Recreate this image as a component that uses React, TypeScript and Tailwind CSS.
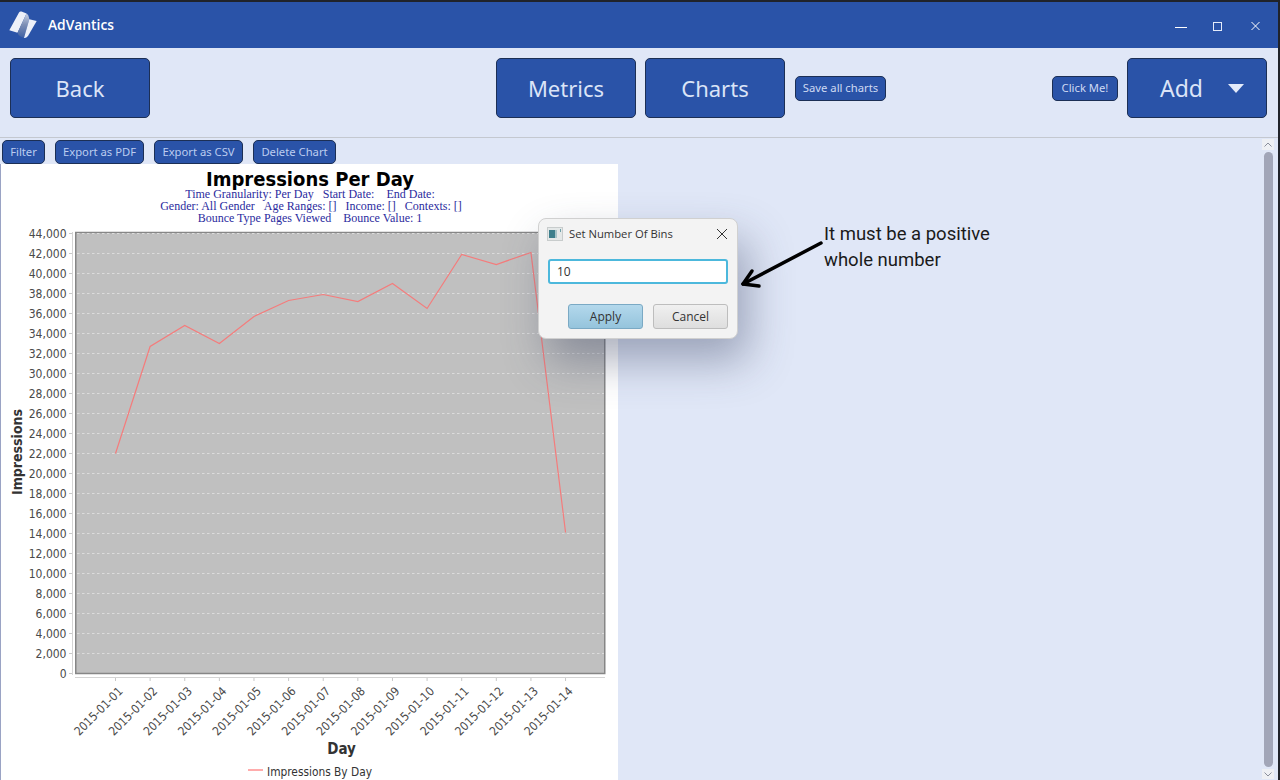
import React from "react";

const data = [22000, 32700, 34800, 33000, 35700, 37300, 37900, 37200, 39000, 36500, 41900, 40900, 42100, 14100];
const yTicks = Array.from({ length: 23 }, (_, i) => i * 2000);
const py = (v: number) => 509.5 - v * 0.01;
const px = (i: number) => 115.5 + i * 34.62;
const tickFont = "'DejaVu Sans Condensed', 'Noto Sans', sans-serif";
const s3 = "\u00a0\u00a0\u00a0";

function Chart() {
  const points = data.map((v, i) => `${px(i)},${py(v)}`).join(" ");
  return (
    <svg width="617" height="616" viewBox="0 0 617 616" className="block">
      <rect width="617" height="616" fill="#ffffff" />
      <g transform="translate(-1 0)">
        <text x="310" y="22" textAnchor="middle" fontSize="20" fontWeight="700" fill="#000" fontFamily="'DejaVu Sans', sans-serif" textLength="208" lengthAdjust="spacingAndGlyphs">Impressions Per Day</text>
        <g fontFamily="'Liberation Serif', serif" fontSize="12" fill="#2b2b9e" textAnchor="middle">
          <text x="310" y="34">{`Time Granularity: Per Day${s3}Start Date:${s3}\u00a0End Date:`}</text>
          <text x="311" y="46">{`Gender: All Gender${s3}Age Ranges: []${s3}Income: []${s3}Contexts: []`}</text>
          <text x="310" y="58">{`Bounce Type Pages Viewed${s3}\u00a0Bounce Value: 1`}</text>
        </g>
        <rect x="75.75" y="68.5" width="529" height="441" fill="#c0c0c0" stroke="#868686" strokeWidth="1.5" />
        {yTicks.map((v) => (
          <g key={v}>
            {v > 0 && <line x1="77" x2="604" y1={py(v)} y2={py(v)} stroke="#dcdcdc" strokeWidth="1" strokeDasharray="2.5 2.5" />}
            <line x1="69" x2="72" y1={py(v)} y2={py(v)} stroke="#c8c8c8" />
            <text x="66.5" y={py(v) + 4.5} textAnchor="end" fontSize="12" fill="#4a4a4a" fontFamily={tickFont}>{v.toLocaleString("en-US")}</text>
          </g>
        ))}
        <line x1="72.5" x2="72.5" y1="68" y2="511" stroke="#d4d4d4" />
        <line x1="75" x2="605" y1="513.5" y2="513.5" stroke="#d4d4d4" />
        <polyline points={points} fill="none" stroke="#f47c7c" strokeWidth="1.2" />
        {data.map((_, i) => (
          <g key={i}>
            <line x1={px(i)} x2={px(i)} y1="514" y2="517" stroke="#c8c8c8" />
            <text transform={`translate(${px(i) + 8} 528) rotate(-45)`} textAnchor="end" fontSize="12" fill="#4a4a4a" fontFamily={tickFont}>
              {`2015-01-${String(i + 1).padStart(2, "0")}`}
            </text>
          </g>
        ))}
        <text transform="translate(22 288) rotate(-90)" textAnchor="middle" fontSize="14" fontWeight="700" fill="#333" fontFamily={tickFont}>Impressions</text>
        <text x="341.5" y="590" textAnchor="middle" fontSize="15" fontWeight="700" fill="#333" fontFamily={tickFont}>Day</text>
        <line x1="248" x2="263" y1="606" y2="606" stroke="#ff9090" strokeWidth="1.5" />
        <text x="267" y="612" fontSize="12" fill="#333" fontFamily={tickFont} textLength="105" lengthAdjust="spacingAndGlyphs">Impressions By Day</text>
      </g>
    </svg>
  );
}

const bigBtn = "w-[140px] h-[60px] shrink-0 flex items-center justify-center rounded-[5px] bg-[#2a53a8] border-[1.5px] border-[#1c2f55] text-[#dbe4f7] text-[22px]";
const smallBtn = "h-[25px] shrink-0 flex items-center justify-center rounded-[5px] bg-[#2a53a8] border-[1.5px] border-[#1c2f55] text-[#cfdaf3] text-[11.25px]";
const filterBtn = "h-[24px] shrink-0 flex items-center justify-center rounded-[5px] bg-[#2a53a8] border-[1.5px] border-[#1c2f55] text-[#bccdf0] text-[11.25px]";

export default function App() {
  return (
    <div className="relative w-[1280px] h-[780px] overflow-hidden flex bg-[#20232a] font-['Noto_Sans',sans-serif]">
      <div className="w-[1278px] h-full flex flex-col">
        <div className="h-[2px] bg-[#20232a] shrink-0" />
        {/* Title bar */}
        <div className="h-[46px] shrink-0 bg-[#2a53a8] flex items-center text-white">
          <svg width="30" height="30" viewBox="0 0 30 30" className="ml-[8px] self-start mt-[8px]">
            <defs>
              <linearGradient id="lg" x1="0" y1="0" x2="0" y2="1">
                <stop offset="0" stopColor="#c9d2e6" />
                <stop offset="0.45" stopColor="#7f90b6" />
                <stop offset="1" stopColor="#3f60a2" />
              </linearGradient>
            </defs>
            <path d="M1.3 20.3 L11 2.5 Q12 1 13.5 1.6 L18.5 3.4 L9.5 22.7 Z" fill="#edf0f9" />
            <path d="M18.5 3.4 Q21 5 21.3 9.3 L16 28 L12.5 26.5 Q10 25 9.5 22.7 Z" fill="url(#lg)" />
            <path d="M21.3 9.3 L28.7 11 L20 26 Q18 28.5 16 28 Z" fill="#edf0f9" />
          </svg>
          <span className="ml-[10px] text-[13.8px] font-semibold font-['Open_Sans',sans-serif]">AdVantics</span>
          <svg width="100" height="20" viewBox="0 0 100 20" className="ml-auto mr-[18px] translate-y-[1px]" fill="none" stroke="#ffffff" strokeWidth="1">
            <line x1="15" x2="27" y1="11.5" y2="11.5" />
            <rect x="53.5" y="6.5" width="8" height="8" stroke="#e4ebfa" />
            <path d="M91.5 6 L99.5 14 M99.5 6 L91.5 14" />
          </svg>
        </div>
        {/* Toolbar */}
        <div className="h-[90px] shrink-0 bg-[#e0e7f7] border-b border-b-[#c4c8d0] flex items-start pt-[10px] pl-[10px] pr-[11px]">
          <button className={bigBtn}>Back</button>
          <div className="ml-[346px] flex items-center gap-[9px]">
            <button className={bigBtn}>Metrics</button>
            <button className={bigBtn}>Charts</button>
            <button className={`${smallBtn} w-[91px] ml-[1px]`}>Save all charts</button>
          </div>
          <div className="ml-auto flex items-center gap-[9px]">
            <button className={`${smallBtn} w-[66px] text-[#bccdf0]`}>Click Me!</button>
            <button className={`${bigBtn} gap-[25px] pl-[10px]`}>
              <span className="text-[23px]">Add</span>
              <svg width="16" height="9" viewBox="0 0 16 9"><path d="M0 0 H16 L8 9 Z" fill="#e4ebfa" /></svg>
            </button>
          </div>
        </div>
        {/* Content */}
        <div className="flex-1 min-h-0 flex bg-[#e0e7f7]">
          <div className="flex-1 min-w-0 flex flex-col pt-[2px]">
            <div className="h-[24px] shrink-0 flex pl-[2px] gap-[10px]">
              <button className={`${filterBtn} w-[43px]`}>Filter</button>
              <button className={`${filterBtn} w-[89px]`}>Export as PDF</button>
              <button className={`${filterBtn} w-[89px]`}>Export as CSV</button>
              <button className={`${filterBtn} w-[83px]`}>Delete Chart</button>
            </div>
            <div className="flex-1 min-h-0 border-l border-l-[#9aa3c4]">
              <Chart />
            </div>
          </div>
          {/* Scrollbar */}
          <div className="w-[16px] shrink-0 flex flex-col items-start pt-[1px] pr-[4px]">
            <div className="w-[12px] h-[11px] bg-[#eef0f4] flex items-center justify-center">
              <svg width="8" height="5" viewBox="0 0 8 5" fill="none" stroke="#8a8f9c"><path d="M0.5 4.5 L4 1 L7.5 4.5" /></svg>
            </div>
            <div className="w-[9px] ml-[2px] flex-1 mt-[2px] mb-[2px] rounded-full bg-[#a2a6b8]" />
            <div className="w-[12px] h-[10px] mb-[1px] bg-[#eef0f4] flex items-center justify-center">
              <svg width="8" height="5" viewBox="0 0 8 5" fill="none" stroke="#8a8f9c"><path d="M0.5 0.5 L4 4 L7.5 0.5" /></svg>
            </div>
          </div>
        </div>
      </div>

      {/* Dialog */}
      <div className="absolute left-[538px] top-[218px] w-[200px] h-[121px] rounded-[8px] bg-[#f3f3f3] border border-[#d0d0d0] shadow-[10px_22px_44px_rgba(60,70,100,0.42)] flex flex-col font-['Open_Sans',sans-serif]">
        <div className="h-[30px] flex items-center pl-[8px] pr-[9px] shrink-0">
          <svg width="16" height="14" viewBox="0 0 16 14">
            <rect x="0.5" y="0.5" width="15" height="13" fill="#e4e8e8" stroke="#c8cccc" />
            <rect x="2" y="3" width="6" height="8" fill="#3d7f8c" />
            <rect x="8" y="3" width="2" height="8" fill="#a8c4c8" />
            <rect x="13" y="2" width="1" height="3" fill="#6fa0a8" />
          </svg>
          <span className="ml-[6px] text-[11.25px] text-[#333]">Set Number Of Bins</span>
          <svg width="12" height="12" viewBox="0 0 12 12" className="ml-auto" fill="none" stroke="#333" strokeWidth="1"><path d="M1 1 L11 11 M11 1 L1 11" /></svg>
        </div>
        <div className="mt-[10px] mx-[9px] h-[25px] rounded-[3px] bg-white border-2 border-[#4cb8dc] flex items-center pl-[7px] text-[12px] text-[#333]">10</div>
        <div className="mt-[20px] flex justify-end gap-[10px] pr-[9px]">
          <button className="w-[75px] h-[25px] pt-[1px] rounded-[3px] border border-[#7aa9c4] bg-gradient-to-b from-[#b3d8ec] to-[#95c4dc] text-[12px] text-[#333]">Apply</button>
          <button className="w-[75px] h-[25px] pt-[1px] rounded-[3px] border border-[#bdbdbd] bg-gradient-to-b from-[#f0f0f0] to-[#dedede] text-[12px] text-[#333]">Cancel</button>
        </div>
      </div>

      {/* Annotation */}
      <svg width="90" height="60" viewBox="0 0 90 60" className="absolute left-[738px] top-[235px]" fill="none" stroke="#000" strokeWidth="3.5" strokeLinecap="round" strokeLinejoin="round">
        <path d="M83 8 L5 49" />
        <path d="M14 36 L5 49 L21 51" />
      </svg>
      <div className="absolute left-[824px] top-[221px] w-[190px] text-[18.5px] leading-[26px] text-[#1a1a1a] font-['Roboto',sans-serif]">
        It must be a positive whole number
      </div>
    </div>
  );
}
